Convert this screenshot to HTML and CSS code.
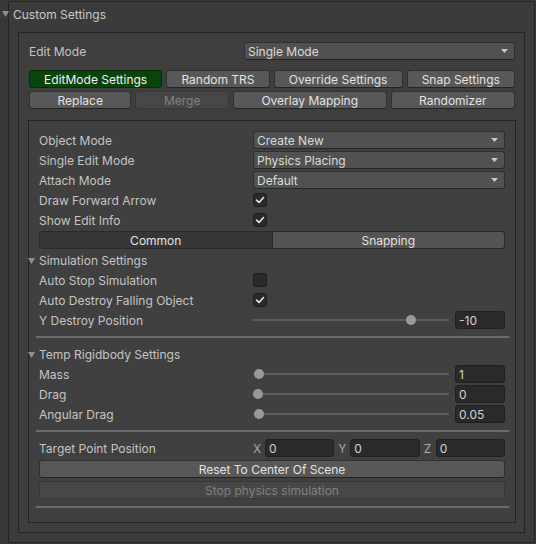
FILE: index.html
```html
<!DOCTYPE html>
<html>
<head>
<meta charset="utf-8">
<link rel="stylesheet" href="styles.css">
</head>
<body>
<div class="outer">
  <div class="fold main-fold">
    <svg class="tri" width="7" height="6" viewBox="0 0 7 6"><polygon points="0,0 7,0 3.5,6"/></svg>
    <span class="txt">Custom Settings</span>
  </div>
  <div class="box2">
    <div class="row inset">
      <span class="lbl lbl-w">Edit Mode</span>
      <div class="popup"><span class="txt">Single Mode</span><svg class="arr" width="7" height="4" viewBox="0 0 7 4"><polygon points="0,0 7,0 3.5,4"/></svg></div>
    </div>
    <div class="btnrow inset r1">
      <div class="btn sel">EditMode Settings</div>
      <div class="btn">Random TRS</div>
      <div class="btn">Override Settings</div>
      <div class="btn">Snap Settings</div>
    </div>
    <div class="btnrow inset r2">
      <div class="btn">Replace</div>
      <div class="btn off">Merge</div>
      <div class="btn">Overlay Mapping</div>
      <div class="btn">Randomizer</div>
    </div>
    <div class="box3">
      <div class="row">
        <span class="lbl">Object Mode</span>
        <div class="popup"><span class="txt">Create New</span><svg class="arr" width="7" height="4" viewBox="0 0 7 4"><polygon points="0,0 7,0 3.5,4"/></svg></div>
      </div>
      <div class="row">
        <span class="lbl">Single Edit Mode</span>
        <div class="popup"><span class="txt">Physics Placing</span><svg class="arr" width="7" height="4" viewBox="0 0 7 4"><polygon points="0,0 7,0 3.5,4"/></svg></div>
      </div>
      <div class="row">
        <span class="lbl">Attach Mode</span>
        <div class="popup"><span class="txt">Default</span><svg class="arr" width="7" height="4" viewBox="0 0 7 4"><polygon points="0,0 7,0 3.5,4"/></svg></div>
      </div>
      <div class="row">
        <span class="lbl">Draw Forward Arrow</span>
        <div class="check"><svg width="12" height="12" viewBox="0 0 12 12"><polyline points="2.5,6.2 5,8.5 9.5,3.5"/></svg></div>
      </div>
      <div class="row">
        <span class="lbl">Show Edit Info</span>
        <div class="check"><svg width="12" height="12" viewBox="0 0 12 12"><polyline points="2.5,6.2 5,8.5 9.5,3.5"/></svg></div>
      </div>
      <div class="tabs">
        <div class="tab on">Common</div>
        <div class="tab">Snapping</div>
      </div>
      <div class="fold sec-fold">
        <svg class="tri" width="7" height="6" viewBox="0 0 7 6"><polygon points="0,0 7,0 3.5,6"/></svg>
        <span class="txt">Simulation Settings</span>
      </div>
      <div class="row">
        <span class="lbl">Auto Stop Simulation</span>
        <div class="check"></div>
      </div>
      <div class="row">
        <span class="lbl">Auto Destroy Falling Object</span>
        <div class="check"><svg width="12" height="12" viewBox="0 0 12 12"><polyline points="2.5,6.2 5,8.5 9.5,3.5"/></svg></div>
      </div>
      <div class="row">
        <span class="lbl">Y Destroy Position</span>
        <div class="slider"><div class="track"></div><div class="thumb" style="left:calc((100% - 10px) * 0.82)"></div></div>
        <div class="num">-10</div>
      </div>
      <div class="sep"></div>
      <div class="fold sec-fold after-sep">
        <svg class="tri" width="7" height="6" viewBox="0 0 7 6"><polygon points="0,0 7,0 3.5,6"/></svg>
        <span class="txt">Temp Rigidbody Settings</span>
      </div>
      <div class="row">
        <span class="lbl">Mass</span>
        <div class="slider"><div class="track"></div><div class="thumb" style="left:calc((100% - 10px) * 0.005)"></div></div>
        <div class="num">1</div>
      </div>
      <div class="row">
        <span class="lbl">Drag</span>
        <div class="slider"><div class="track"></div><div class="thumb" style="left:calc((100% - 10px) * 0)"></div></div>
        <div class="num">0</div>
      </div>
      <div class="row">
        <span class="lbl">Angular Drag</span>
        <div class="slider"><div class="track"></div><div class="thumb" style="left:calc((100% - 10px) * 0.005)"></div></div>
        <div class="num">0.05</div>
      </div>
      <div class="sep"></div>
      <div class="row after-sep">
        <span class="lbl">Target Point Position</span>
        <div class="vec">
          <div class="vg"><span class="vl">X</span><div class="field">0</div></div>
          <div class="vg"><span class="vl">Y</span><div class="field">0</div></div>
          <div class="vg"><span class="vl">Z</span><div class="field">0</div></div>
        </div>
      </div>
      <div class="btn wide">Reset To Center Of Scene</div>
      <div class="btn wide off">Stop physics simulation</div>
      <div class="sep"></div>
    </div>
  </div>
</div>
</body>
</html>
```

FILE: styles.css
```css
html, body {
  margin: 0;
  padding: 0;
}

body {
  width: 536px;
  height: 544px;
  overflow: hidden;
  background: #383838;
  font-family: Inter, "Noto Sans", sans-serif;
  font-size: 12px;
  line-height: 18px;
  color: #c4c4c4;
}

.outer {
  margin: 1px 1px 0 8px;
  height: 542px;
  box-sizing: border-box;
  border: 1px solid #252525;
  border-radius: 2px;
  background: #3b3b3b;
  padding: 0 9px 9px 9px;
  display: flex;
  flex-direction: column;
}

/* text shifted 1px down inside an 18px row */
.txt, .lbl, .vl {
  padding-top: 2px;
  line-height: 16px;
}

.fold {
  display: flex;
  align-items: center;
  height: 18px;
  flex: none;
  white-space: nowrap;
}

.tri {
  flex: none;
  fill: #8f8f8f;
}

.main-fold {
  margin-top: 3px;
  margin-bottom: 9px;
  color: #c8c8c8;
}

.main-fold .tri {
  margin-left: -16px;
  margin-right: 4px;
}

.sec-fold .tri {
  margin-left: -11px;
  margin-right: 4px;
  margin-top: 1px;
}

.box2 {
  flex: 1;
  box-sizing: border-box;
  border: 1px solid #242424;
  background: #3e3e3e;
  padding: 9px 8px 9px 9px;
  display: flex;
  flex-direction: column;
}

.inset {
  margin-left: 1px;
  margin-right: 1px;
}

.row {
  display: flex;
  align-items: center;
  height: 18px;
  flex: none;
}

.lbl {
  width: 214px;
  flex: none;
  white-space: nowrap;
}

.lbl-w {
  width: 215px;
}

.popup {
  flex: 1;
  height: 18px;
  box-sizing: border-box;
  background: #515151;
  border: 1px solid #2f2f2f;
  border-bottom-color: #262626;
  border-radius: 3px;
  padding: 0 6px 0 3px;
  display: flex;
  align-items: center;
  justify-content: space-between;
  color: #dadada;
}

.arr {
  fill: #c8c8c8;
  flex: none;
}

.btnrow {
  display: flex;
  gap: 4px;
  height: 18px;
  flex: none;
}

.r1 {
  margin-top: 10px;
}

.r2 {
  margin-top: 3px;
}

.btn {
  flex: 1 1 auto;
  height: 18px;
  box-sizing: border-box;
  background: #585858;
  border: 1px solid #303030;
  border-bottom-color: #242424;
  border-radius: 3px;
  color: #e2e2e2;
  text-align: center;
  padding-top: 1px;
  line-height: 16px;
  white-space: nowrap;
}

.btn.sel {
  background: #0b440b;
  border-color: #0a2a0a;
  color: #f0f0f0;
}

.btn.off {
  background: #474747;
  border-color: #383838;
  color: #808080;
}

.btn.wide {
  flex: none;
  margin-top: 1px;
}

.box3 {
  flex: 1;
  margin-top: 11px;
  box-sizing: border-box;
  border: 1px solid #242424;
  background: #404040;
  padding: 10px 10px 14px 10px;
  display: flex;
  flex-direction: column;
  gap: 2px;
}

.check {
  width: 14px;
  height: 14px;
  box-sizing: border-box;
  background: #2a2a2a;
  border: 1px solid #1f1f1f;
  border-radius: 3px;
  margin-top: -1px;
  display: flex;
  align-items: center;
  justify-content: center;
}

.check svg {
  fill: none;
  stroke: #e6e6e6;
  stroke-width: 1.6;
  stroke-linecap: round;
  stroke-linejoin: round;
}

.tabs {
  display: flex;
  height: 18px;
  flex: none;
}

.tab {
  flex: 1;
  box-sizing: border-box;
  height: 18px;
  text-align: center;
  padding-top: 1px;
  line-height: 16px;
  color: #e2e2e2;
  background: #535353;
  border: 1px solid #2a2a2a;
  border-left: none;
  border-radius: 0 3px 3px 0;
}

.tab.on {
  background: #363636;
  border-left: 1px solid #2a2a2a;
  border-radius: 3px 0 0 3px;
}

.slider {
  flex: 1;
  position: relative;
  height: 18px;
}

.track {
  height: 2px;
  margin-top: 8px;
  background: #5b5b5b;
}

.thumb {
  position: absolute;
  top: 4px;
  width: 10px;
  height: 10px;
  border-radius: 50%;
  background: #999999;
}

.num {
  width: 50px;
  margin-left: 6px;
  flex: none;
}

.num, .field {
  height: 18px;
  box-sizing: border-box;
  background: #2a2a2a;
  border: 1px solid #202020;
  border-radius: 3px;
  padding-left: 3px;
  padding-top: 1px;
  color: #d2d2d2;
  line-height: 16px;
}

.sep {
  flex: none;
  height: 2px;
  background: #6c6c6c;
  margin: 5px -4px 0 -3px;
}

.after-sep {
  margin-top: 5px;
}

.vec {
  flex: 1;
  display: flex;
  gap: 4px;
}

.vg {
  flex: 1;
  display: flex;
  align-items: center;
  min-width: 0;
}

.vl {
  width: 12px;
  flex: none;
  color: #a8a8a8;
}

.field {
  flex: 1;
  min-width: 0;
}
```
